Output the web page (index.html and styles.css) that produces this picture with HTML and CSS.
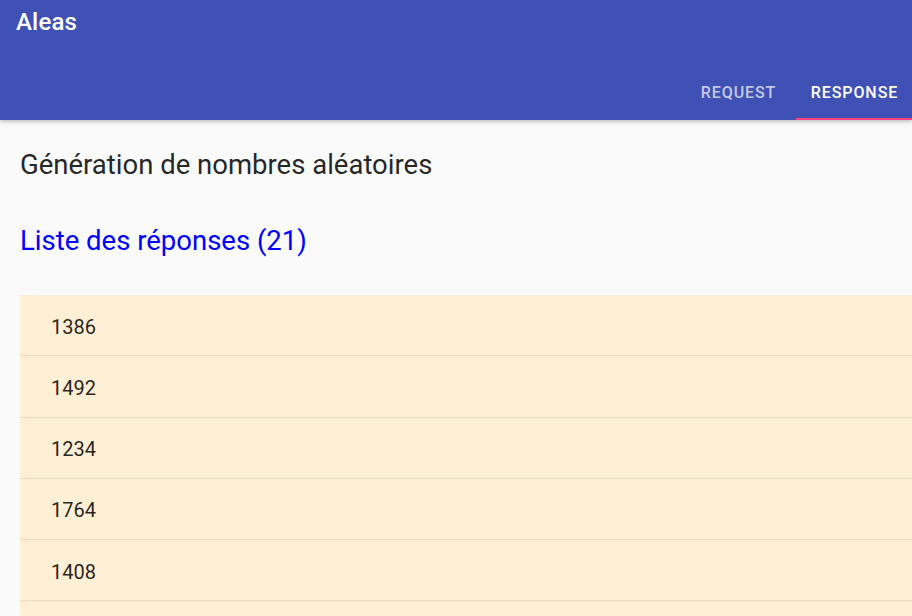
FILE: index.html
```html
<!DOCTYPE html>
<html lang="fr">
<head>
<meta charset="utf-8">
<title>Aleas</title>
<link rel="stylesheet" href="styles.css">
</head>
<body>
<header class="toolbar">
  <div class="title">Aleas</div>
  <nav class="tabs">
    <div class="tab">REQUEST</div>
    <div class="tab active">RESPONSE</div>
  </nav>
</header>
<main class="content">
  <h1 class="heading">Génération de nombres aléatoires</h1>
  <h2 class="subheading">Liste des réponses (21)</h2>
  <ul class="list">
    <li class="item">1386</li>
    <li class="item">1492</li>
    <li class="item">1234</li>
    <li class="item">1764</li>
    <li class="item">1408</li>
    <li class="item"></li>
  </ul>
</main>
</body>
</html>
```
FILE: styles.css
```css
html, body {
  margin: 0;
  padding: 0;
  background: #fafafa;
  font-family: Roboto, "Liberation Sans", sans-serif;
  overflow: hidden;
}
.toolbar {
  background: #3f51b5;
  color: #fff;
  height: 120px;
  display: flex;
  flex-direction: column;
  justify-content: space-between;
  box-shadow: 0 2px 4px rgba(0, 0, 0, 0.22);
  position: relative;
  z-index: 1;
}
.title {
  font-size: 24px;
  font-weight: 500;
  line-height: 28px;
  padding: 8px 16px 0;
  letter-spacing: 0.2px;
}
.tabs {
  display: flex;
  justify-content: flex-end;
  height: 48px;
}
.tab {
  width: 116px;
  box-sizing: border-box;
  text-align: center;
  font-size: 16px;
  font-weight: 500;
  line-height: 42px;
  padding-bottom: 6px;
  padding-left: 1px;
  letter-spacing: 0.9px;
  color: rgba(255, 255, 255, 0.7);
}
.tab.active {
  color: #fff;
  border-bottom: 2px solid #ff4081;
  padding-bottom: 4px;
}
.content {
  padding: 29px 0 0 20px;
}
.heading {
  margin: 0;
  font-size: 27.5px;
  font-weight: 400;
  line-height: 32px;
  color: rgba(0, 0, 0, 0.87);
}
.subheading {
  margin: 44px 0 0;
  font-size: 27.5px;
  font-weight: 400;
  line-height: 32px;
  color: #0000ff;
}
.list {
  list-style: none;
  margin: 38px 0 0;
  padding: 0;
}
.item {
  background: #ffefd5;
  box-sizing: border-box;
  height: 61.25px;
  padding: 19.5px 31px 16.75px;
  font-size: 20px;
  line-height: 24px;
  color: rgba(0, 0, 0, 0.87);
  border-bottom: 1px solid #e8d9c2;
}
```
